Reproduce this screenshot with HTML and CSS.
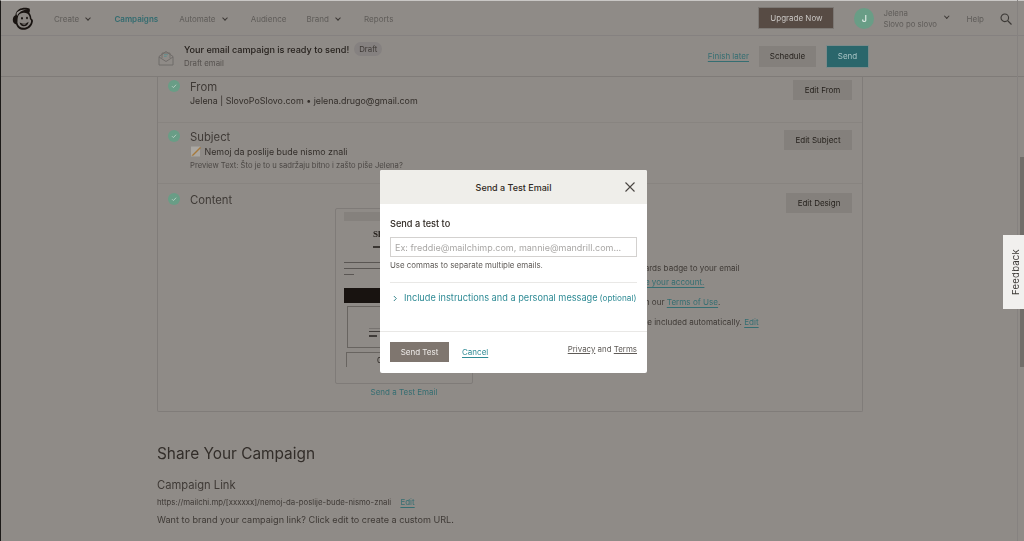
FILE: index.html
```html
<!DOCTYPE html>
<html lang="en">
<head>
<meta charset="utf-8">
<title>Send a Test Email</title>
<link rel="stylesheet" href="styles.css">
</head>
<body>
<div class="app">
  <header class="topbar">
    <svg class="logo" viewBox="0 0 22 23" width="22" height="23" aria-hidden="true">
      <path d="M7 2.200C10 .3 15 .2 17.500 1.600c.7 1.600.5 3-.2 4.200 1.500 2 2 4 2 5.600 1.600.8 2 2.400 1.400 3.800C20 19.600 16 22.800 11.500 22.800 7.500 22.800 5 20.500 4.200 17.500 2 17 .6 15 .8 12.500 1 10 2.400 8.800 3.400 8.300 3.500 5.800 5 3.500 7 2.200z" fill="#181310"/>
      <path d="M6.400 8.500C8 5.800 12 5.300 15.200 6.400c1.800 1.200 2.800 3.400 2.700 5.800.7.300 1.300 1 1.200 2-.2 3.300-3.800 6.600-7.600 6.600-3.200 0-5.400-1.800-6.100-5 .2-2.400 0-5 1-7.300z" fill="#8a8682"/>
      <path d="M4.800 5.600C7.500 3 11.500 2 15.800 2.600c-3.500.2-6.700 1.200-9 3.600-.9.900-1.300 1.700-1.500 2.800-.6-.6-.9-2.200-.5-3.400z" fill="#9b9793"/>
      <ellipse cx="10" cy="11.300" rx=".9" ry="1.200" fill="#181310"/><ellipse cx="15" cy="11" rx=".9" ry="1.200" fill="#181310"/>
      <path d="M7.600 15.500c2.800 1.500 6.700 1.300 9-.8-.4 3.200-2.400 4.500-4.800 4.500-2.200 0-3.800-1.400-4.200-3.700z" fill="#181310"/>
      <path d="M9.500 16.500c1.700.5 3.500.4 5-.3-.7 1-1.500 1.300-2.500 1.300s-1.900-.3-2.500-1z" fill="#aaa6a2"/>
    </svg>
    <nav class="nav">
      <span class="nav-item nav-create">Create <i class="chev"></i></span>
      <span class="nav-item nav-active">Campaigns</span>
      <span class="nav-item nav-auto">Automate <i class="chev"></i></span>
      <span class="nav-item nav-aud">Audience</span>
      <span class="nav-item nav-brand">Brand <i class="chev"></i></span>
      <span class="nav-item">Reports</span>
    </nav>
    <button class="btn btn-upgrade">Upgrade Now</button>
    <span class="avatar">J</span>
    <span class="account"><span>Jelena</span><span>Slovo po slovo</span></span>
    <i class="chev chev-account"></i>
    <span class="help">Help</span>
    <svg class="search" viewBox="0 0 14 14" width="12" height="12" aria-hidden="true"><circle cx="5.600" cy="5.600" r="4.400" fill="none" stroke="#3b3835" stroke-width="1.300"/><path d="M9 9l4.400 4.400" stroke="#3b3835" stroke-width="1.400"/></svg>
  </header>

  <section class="statusbar">
    <svg class="mail" viewBox="0 0 16 16" width="16" height="16" aria-hidden="true">
      <path d="M1 6.500 8 1.500l7 5V15H1z M1 7l7 4.500L15 7" fill="none" stroke="#6c6966" stroke-width=".9"/>
      <path d="M4 8V3h8v5" fill="none" stroke="#6c6966" stroke-width=".8"/>
      <path d="M6 4.700h4M6 6.400h2.600" stroke="#5e8c8c" stroke-width=".9"/>
    </svg>
    <div class="status-text">
      <div class="status-title"><strong>Your email campaign is ready to send!</strong><span class="pill">Draft</span></div>
      <div class="status-sub">Draft email</div>
    </div>
    <a class="link finish">Finish later</a>
    <button class="btn btn-grey btn-schedule">Schedule</button>
    <button class="btn btn-send">Send</button>
  </section>

  <main class="content">
    <div class="panel">
      <div class="row row-from">
        <span class="check"><svg viewBox="0 0 12 12" width="12" height="12"><path d="M4 6.200 5.400 7.600l2.700-2.900" fill="none" stroke="#b4cdc0" stroke-width="1"/></svg></span>
        <div class="row-body">
          <h3>From</h3>
          <p>Jelena | SlovoPoSlovo.com • jelena.drugo@gmail.com</p>
        </div>
        <button class="btn btn-grey btn-edit">Edit From</button>
      </div>
      <div class="row row-subject">
        <span class="check"><svg viewBox="0 0 12 12" width="12" height="12"><path d="M4 6.200 5.400 7.600l2.700-2.900" fill="none" stroke="#b4cdc0" stroke-width="1"/></svg></span>
        <div class="row-body">
          <h3>Subject</h3>
          <p><svg class="memo" viewBox="0 0 12 12" width="12" height="12" aria-hidden="true"><rect x="1" y="1.500" width="9" height="10" fill="#aaa7a2"/><path d="M2.500 9.500 10 2l1 1-7.500 7.500-2 .5z" fill="#a5793a"/></svg> Nemoj da poslije bude nismo znali</p>
          <p class="preview-text">Preview Text: Što je to u sadržaju bitno i zašto piše Jelena?</p>
        </div>
        <button class="btn btn-grey btn-edit">Edit Subject</button>
      </div>
      <div class="row row-content">
        <span class="check"><svg viewBox="0 0 12 12" width="12" height="12"><path d="M4 6.200 5.400 7.600l2.700-2.900" fill="none" stroke="#b4cdc0" stroke-width="1"/></svg></span>
        <div class="row-body content-body">
          <h3>Content</h3>
          <div class="content-grid">
            <div class="thumb-col">
              <div class="thumb">
                <div class="thumb-inner">
                  <div class="thumb-head"></div>
                  <div class="thumb-logo">Sl</div>
                  <div class="thumb-rule"></div>
                  <div class="thumb-copy"></div>
                  <div class="thumb-copy"></div>
                  <div class="thumb-copy short"></div>
                  <div class="thumb-dark"></div>
                  <div class="thumb-box"><div class="thumb-line"></div><div class="thumb-small"></div><div class="thumb-small short"></div></div>
                  <div class="thumb-box2">0</div>
                </div>
              </div>
              <a class="thumb-link">Send a Test Email</a>
            </div>
            <div class="notes">
              <p>On a free plan we will add a MonkeyRewards badge to your email<br>email footer. To remove a badge, <a class="link">upgrade your account.</a></p>
              <p>All the links in your emails do comply with our <a class="link">Terms of Use</a>.</p>
              <p>A plain-text version of your content will be included automatically. <a class="link">Edit</a></p>
            </div>
          </div>
        </div>
        <button class="btn btn-grey btn-edit">Edit Design</button>
      </div>
    </div>

    <section class="share">
      <h2>Share Your Campaign</h2>
      <h4>Campaign Link</h4>
      <p class="url">https://mailchi.mp/[xxxxxx]/nemoj-da-poslije-bude-nismo-znali <a class="link">Edit</a></p>
      <p class="brand-note">Want to brand your campaign link? Click edit to create a custom URL.</p>
    </section>
  </main>

  <div class="scrollbar"><div class="scroll-thumb"></div></div>
</div>

<div class="modal" role="dialog">
  <div class="modal-head">
    <span>Send a Test Email</span>
    <svg class="close" viewBox="0 0 12 12" width="12" height="12" aria-hidden="true"><path d="M1.500 1.500l9 9M10.500 1.500l-9 9" stroke="#4a4642" stroke-width="1.100"/></svg>
  </div>
  <div class="modal-body">
    <label class="field-label">Send a test to</label>
    <input class="field" placeholder="Ex: freddie@mailchimp.com, mannie@mandrill.com...">
    <div class="hint">Use commas to separate multiple emails.</div>
    <div class="include">
      <svg viewBox="0 0 6 8" width="5" height="7" aria-hidden="true"><path d="M1 1l3 3-3 3" fill="none" stroke="#39868d" stroke-width="1.200"/></svg>
      <span class="include-text">Include instructions and a personal message</span>
      <span class="optional">(optional)</span>
    </div>
  </div>
  <div class="modal-foot">
    <button class="btn btn-test">Send Test</button>
    <a class="link cancel">Cancel</a>
    <span class="legal"><u>Privacy</u> and <u>Terms</u></span>
  </div>
</div>

<div class="feedback"><span>Feedback</span></div>
</body>
</html>
```

FILE: styles.css
```css
* { box-sizing: border-box; }
html, body { margin: 0; height: 100%; overflow: hidden; }
body { background: #8f8b87; font-family: Inter, "Liberation Sans", sans-serif; color: #37322e; filter: blur(.55px); }
button { font-family: inherit; border: 0; cursor: pointer; }
h2, h3, h4, p { margin: 0; font-weight: 400; }

.app { height: 541px; border-left: 1px solid #1c1a18; border-top: 1px solid #c9c7c5; position: relative; padding-top: 1px; }

.topbar { height: 34px; display: flex; align-items: center; padding-left: 11px; border-bottom: 1px solid #858180; font-size: 8px; }
.logo { flex: none; }
.nav { display: flex; margin-left: 20px; flex: 1; color: #5f5c59; }
.nav-item { white-space: nowrap; margin-right: 20px; }
.nav-create { margin-right: 24px; }
.nav-active { color: #336c70; font-weight: 600; margin-right: 21px; }
.nav-auto { margin-right: 24px; }
.nav-aud { margin-right: 20px; }
.nav-brand { margin-right: 24px; }
.chev { display: inline-block; width: 4px; height: 4px; border: solid #3c3835; border-width: 0 1px 1px 0; transform: rotate(45deg); margin: 0 0 2px 5px; }

.btn { display: inline-flex; align-items: center; justify-content: center; font-size: 8px; }
.btn-upgrade { width: 74px; height: 20px; background: #574b44; color: #c9c6c3; margin-right: 21px; margin-top: -1px; box-shadow: 0 0 0 1px #7c7874; }
.avatar { width: 20px; height: 21px; border-radius: 50%; background: #699d86; color: #d9e5df; font-size: 9px; font-weight: 600; display: flex; align-items: center; justify-content: center; margin-right: 9px; }
.account { display: flex; flex-direction: column; font-size: 7.800px; line-height: 10.500px; color: #5f5c59; margin-right: 8px; }
.chev-account { margin: -5px 0 0 0; width: 3.500px; height: 3.500px; }
.help { font-size: 8px; color: #5f5c59; margin-left: 18px; margin-right: 16px; }
.search { margin-right: 12px; }

.statusbar { height: 41px; display: flex; align-items: center; border-bottom: 1px solid #7f7b78; padding-left: 157px; }
.mail { flex: none; margin-right: 10px; margin-top: 3px; }
.status-text { flex: 1; margin-top: -2px; }
.status-title { display: flex; align-items: center; font-size: 9.100px; color: #26211d; height: 14px; }
.status-title strong { font-weight: 500; }
.pill { margin-left: 5px; height: 14px; padding: 0 5px; border-radius: 7px; background: #858180; font-size: 7.800px; color: #3f3a36; display: flex; align-items: center; }
.status-sub { font-size: 7.800px; color: #55514e; margin-top: 2px; }
.link { color: #356e72; text-decoration: underline; text-underline-offset: 2px; }
.finish { font-size: 8px; margin-right: 10px; }
.btn-grey { background: #84807c; color: #241f1b; font-size: 8px; height: 21px; }
.btn-schedule { width: 57px; margin-right: 11px; }
.btn-send { width: 41px; height: 21px; background: #2a666b; color: #a9c4c5; margin-right: 156px; box-shadow: 0 0 0 1px #7c8a8a; }

.content { padding-left: 156px; width: 862px; }
.panel { width: 706px; height: 335px; border: solid #807c79; border-width: 0 1px 1px; border-radius: 0 0 2px 2px; }
.row { display: flex; align-items: flex-start; padding: 3px 10px 0 10px; border-bottom: 1px solid #888480; position: relative; }
.row-from { height: 46px; }
.row-subject { height: 61px; padding-top: 7px; }
.row-content { border-bottom: 0; padding-top: 9px; }
.check { width: 12px; height: 12px; border-radius: 50%; background: #699d86; flex: none; margin-right: 10px; display: flex; }
.check svg { display: block; }
.row-body { flex: 1; font-size: 8.900px; line-height: 12px; color: #332e2a; }
.row-body h3 { font-size: 11.300px; line-height: 14px; color: #3f3a36; margin-bottom: 1px; }
.preview-text { font-size: 7.650px; color: #4c4845; margin-top: 2px; }
.memo { vertical-align: -2px; }
.btn-edit { flex: none; height: 20px; }
.row-from .btn-edit { width: 59px; }
.row-subject .btn-edit { width: 68px; }
.row-content .btn-edit { width: 66px; }

.content-grid { display: flex; margin-top: 0; margin-left: 145px; }
.thumb-col { width: 138px; flex: none; display: flex; flex-direction: column; align-items: center; }
.thumb { width: 138px; height: 176px; border: 1px solid #7f7b78; border-radius: 2px; padding: 3px 8px 0; }
.thumb-inner { height: 155px; overflow: hidden; }
.thumb-head { height: 9px; margin: 0 -5px; background: #85817d; }
.thumb-logo { font-family: "Liberation Serif", serif; font-weight: 700; font-size: 9px; line-height: 12px; margin: 7px 0 0 29px; color: #241f1b; }
.thumb-rule { width: 9px; height: 1.500px; background: #3a3632; margin: 6px 0 14px 29px; }
.thumb-copy { height: 1px; background: #5a5653; margin-bottom: 5px; }
.thumb-copy.short { width: 10px; }
.thumb-dark { height: 15px; margin: 13px 0 0; background: #181310; }
.thumb-box { height: 42px; margin: 3px 0 0 3px; border: 1px solid #686460; padding: 21px 0 0 21px; overflow: hidden; }
.thumb-line { height: 1px; background: #777370; margin-bottom: 2px; }
.thumb-small { height: 1.500px; background: #3f3b38; margin-bottom: 3px; }
.thumb-small.short { width: 8px; }
.thumb-box2 { height: 30px; margin: 4px 0 0 2px; border: 1px solid #686460; font-size: 8px; line-height: 12px; padding: 1px 0 0 30px; color: #241f1b; }
.thumb-link { font-size: 8px; color: #356e72; margin-top: 2px; }
.notes { margin-left: 17px; padding-top: 53px; font-size: 8.100px; line-height: 14px; color: #3f3a36; white-space: nowrap; }
.notes p { margin-bottom: 6px; }

.share { padding: 33px 0 0; }
.share h2 { font-size: 15.400px; line-height: 18px; color: #332e2a; }
.share h4 { font-size: 11.200px; line-height: 14px; margin-top: 15px; color: #3f3a36; }
.url { font-size: 7.800px; line-height: 12px; margin-top: 4px; color: #3f3a36; }
.url .link { margin-left: 7px; font-size: 8px; }
.brand-note { font-size: 9.100px; line-height: 12px; margin-top: 6px; color: #3f3a36; }

.scrollbar { position: absolute; top: -1px; right: 0; bottom: 0; width: 7px; border-left: 1px solid #868280; }
.scroll-thumb { position: absolute; top: 157px; right: 0; width: 4px; height: 210px; background: #716d69; }

.modal { position: fixed; left: 380px; top: 170px; width: 267px; height: 203px; background: #fff; border-radius: 2px; display: flex; flex-direction: column; }
.modal-head { height: 34px; background: #efeeea; display: flex; align-items: center; justify-content: center; font-size: 9px; font-weight: 500; color: #2f2822; position: relative; border-radius: 2px 2px 0 0; flex: none; }
.close { position: absolute; right: 11px; top: 11px; }
.modal-body { flex: 1; padding: 14px 10px 0; }
.field-label { display: block; font-size: 9.200px; font-weight: 500; line-height: 12px; color: #2f2822; }
.field { display: block; width: 100%; height: 20px; margin-top: 7px; padding: 0 4px; border: 1px solid #d3d1cf; font-family: inherit; font-size: 9px; outline: 0; }
.field::placeholder { color: #a8a6a4; opacity: 1; }
.hint { font-size: 7.900px; line-height: 10px; margin-top: 3px; color: #5f5b57; }
.include { margin-top: 12px; border-top: 1px solid #e9e8e6; padding-top: 9px; display: flex; align-items: center; white-space: nowrap; color: #2f8b95; }
.include svg { margin: 0 6px 0 3px; flex: none; }
.include-text { font-size: 9.200px; line-height: 12px; }
.optional { font-size: 8.200px; margin-left: 2px; }
.modal-foot { height: 42px; flex: none; border-top: 1px solid #e9e8e6; display: flex; align-items: center; padding: 0 10px 2px; }
.btn-test { width: 59px; height: 20px; background: #7f766f; color: #efecea; }
.cancel { font-size: 8px; margin-left: 13px; color: #2f8b95; }
.legal { margin-left: auto; font-size: 7.900px; color: #5f5b57; margin-top: -5px; }

.feedback { position: fixed; right: 0; top: 235px; width: 21px; height: 74px; background: #f1f0ee; display: flex; align-items: center; justify-content: center; padding-left: 3px; }
.feedback span { writing-mode: vertical-rl; transform: rotate(180deg); font-size: 9.600px; color: #3b3835; letter-spacing: .02em; }
```
